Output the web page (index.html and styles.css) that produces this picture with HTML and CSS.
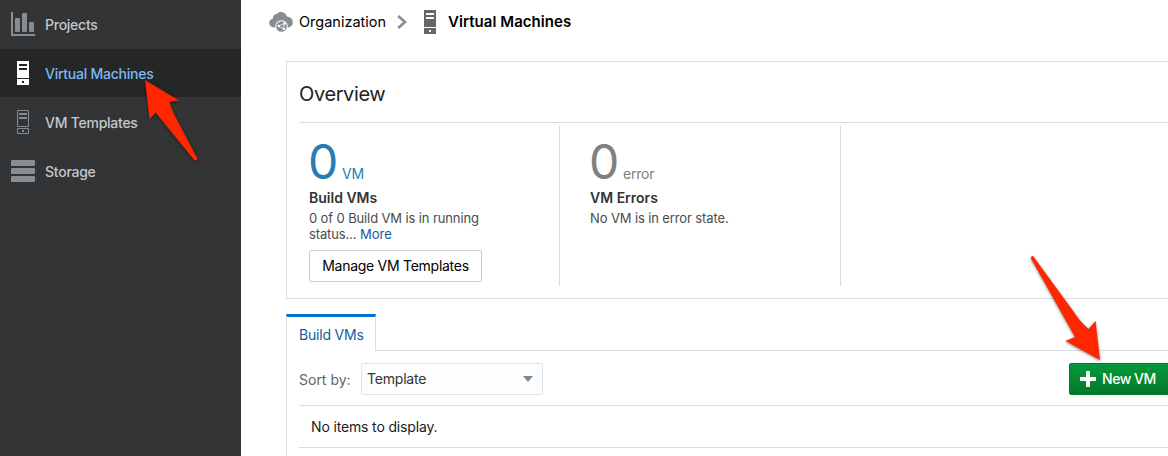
FILE: index.html
```html
<!DOCTYPE html>
<html lang="en">
<head>
<meta charset="utf-8">
<title>Virtual Machines</title>
<link rel="stylesheet" href="styles.css">
</head>
<body>
<div class="app">
  <nav class="sidebar">
    <a class="nav-item">
      <svg class="nav-icon" viewBox="0 0 24 24"><path fill="#878d90" d="M0 0h2v22h22v2H0z"/><rect x="4" y="6" width="5" height="14" rx="1" fill="#878d90"/><rect x="11" y="1" width="5" height="19" rx="1" fill="#878d90"/><rect x="18" y="10" width="5" height="10" rx="1" fill="#878d90"/></svg>
      <span>Projects</span>
    </a>
    <a class="nav-item active">
      <svg class="nav-icon" viewBox="0 0 24 24"><path fill="#fff" fill-rule="evenodd" d="M6 0h12v17H6zM8 3v2h8V3zM8 7v2h8V7zM6 18h12v6H6zM11 20v2h2v-2z"/></svg>
      <span>Virtual Machines</span>
    </a>
    <a class="nav-item">
      <svg class="nav-icon" viewBox="0 0 24 24"><path fill="none" stroke="#878d90" d="M6.5.5h11v16h-11zM6.500 18.500h11v5h-11z"/><path fill="#878d90" d="M8 3h8v2H8zM8 7h8v2H8zM11 20h2v2h-2z"/></svg>
      <span>VM Templates</span>
    </a>
    <a class="nav-item">
      <svg class="nav-icon" viewBox="0 0 24 24"><g fill="#878d90"><rect y="1" width="24" height="6" rx="1"/><rect y="9" width="24" height="6" rx="1"/><rect y="17" width="24" height="6" rx="1"/></g></svg>
      <span>Storage</span>
    </a>
  </nav>
  <main class="main">
    <header class="crumbs">
      <svg class="cloud" viewBox="0 0 24 22"><path fill="#878d90" d="M5 16.500C2 16.500.2 14.500.2 11.800.2 9.500 2 8 4 7.500 3.700 4.500 5.800 3 7.800 3 9 1.300 10.600.8 12.300 1c3 .2 5 2 5.500 4.600 3.200.1 6 2.300 6 5.700 0 2.700-1.600 4.700-4.300 5.200z"/><circle cx="12.500" cy="15.500" r="6.300" fill="#fff"/><circle cx="12.500" cy="15.500" r="5.300" fill="#878d90"/><path fill="none" stroke="#fff" stroke-width=".8" d="M9.500 15l5.800-2.500M9.500 15l5.300 3M15.300 12.500l-.5 5.500"/><g fill="#fff"><circle cx="15.300" cy="12.500" r="1.300"/><circle cx="9.800" cy="15" r="1.200"/><circle cx="14.800" cy="18" r="1.200"/></g></svg>
      <span class="crumb">Organization</span>
      <svg class="chev" viewBox="0 0 10 14"><path fill="none" stroke="#8b9193" stroke-width="2.800" d="M1.200 1L8 7l-6.800 6"/></svg>
      <svg class="server" viewBox="0 0 12 24"><path fill="#656769" fill-rule="evenodd" d="M0 0h12v17H0zM2 3v2h8V3zM2 7v2h8V7zM0 18h12v6H0zM5 20v2h2v-2z"/></svg>
      <span class="crumb current">Virtual Machines</span>
    </header>
    <section class="overview">
      <h2 class="overview-title"><span>Overview</span></h2>
      <div class="stats">
        <div class="stat">
          <div class="figure blue"><span class="num">0</span><span class="unit">VM</span></div>
          <h3 class="stat-name">Build VMs</h3>
          <p class="stat-text">0 of 0 Build VM is in running<br>status... <a class="more">More</a></p>
          <button class="btn">Manage VM Templates</button>
        </div>
        <div class="stat">
          <div class="figure"><span class="num">0</span><span class="unit">error</span></div>
          <h3 class="stat-name">VM Errors</h3>
          <p class="stat-text">No VM is in error state.</p>
        </div>
      </div>
    </section>
    <div class="tabs"><div class="tab">Build VMs</div><div class="tab-rest"></div></div>
    <section class="panel">
      <div class="toolbar">
        <span class="sort-label">Sort by:</span>
        <div class="select"><span>Template</span><svg class="caret" viewBox="0 0 10 6"><path fill="#80868a" d="M0 0h10L5 6z"/></svg></div>
        <button class="new-btn"><svg class="plus" viewBox="0 0 16 16"><path fill="#fff" d="M6 0h4v6h6v4h-6v6H6v-6H0V6h6z"/></svg><span>New VM</span></button>
      </div>
      <div class="empty">No items to display.</div>
    </section>
  </main>
  <svg class="arrows" viewBox="0 0 1168 456"><g fill="#ff2600"><path d="M145 80l34 20.500-9.500 1.500q2 7 5 13l22.500 43q.5 3-2.500 2.500l-39-48-6 7z"/><path d="M1033 256q-2.500 0-2 2.500l44 78.500-9.500 4 34.500 19-4.500-39-7 8q-9-8-15-17.500z"/></g></svg>
</div>
</body>
</html>
```
FILE: styles.css
```css
* { box-sizing: border-box; }
body { margin: 0; font-family: Inter, "Liberation Sans", sans-serif; font-size: 14px; color: #222; background: #fff; }
h2, h3, p { margin: 0; }
button { font: inherit; }
.app { position: relative; display: flex; width: 1168px; height: 456px; overflow: hidden; }
.sidebar { width: 241px; flex: none; background: #333436; }
.nav-item { display: flex; align-items: center; gap: 10px; height: 49px; padding-left: 11px; color: #c3c8cc; font-weight: 500; letter-spacing: -.25px; white-space: nowrap; border-bottom: 1px solid #333436; }
.nav-item.active { background: #252628; color: #7cb8f2; }
.nav-icon { width: 24px; height: 24px; flex: none; }
.main { flex: 1; min-width: 0; }
.crumbs { display: flex; align-items: center; height: 43px; padding-left: 28px; color: #000; white-space: nowrap; }
.cloud { width: 24px; height: 22px; margin-right: 6px; }
.crumb { width: 87px; font-size: 14.500px; }
.chev { width: 10px; height: 14px; margin: 0 17px 0 11px; }
.server { width: 12px; height: 24px; margin-right: 12px; }
.current { width: auto; font-size: 15px; font-weight: 600; letter-spacing: .05px; }
.overview { margin: 18px 0 0 45px; height: 238px; padding-left: 12px; border: 1px solid #d6dfe6; border-right: 0; }
.overview-title { height: 61px; border-bottom: 1px solid #d6dfe6; font-size: 20px; font-weight: 400; letter-spacing: -.38px; line-height: 65px; }
.stats { display: flex; padding-top: 3px; }
.stat { width: 261px; height: 160px; padding: 9px 0 0 10px; border-right: 1px solid #d6dfe6; }
.stat + .stat { width: 281px; padding-left: 30px; }
.figure { display: flex; align-items: baseline; height: 53px; color: #808080; line-height: 54px; }
.figure.blue { color: #267db3; }
.num { width: 29px; font-size: 48px; margin: 0 5px 0 -1px; }
.unit { letter-spacing: -.2px; }
.stat-name { height: 19px; font-size: 14px; font-weight: 600; line-height: 19px; color: #333; }
.stat-text { margin-top: 3px; font-size: 13px; line-height: 16px; letter-spacing: -.12px; color: #4c4c4c; white-space: nowrap; }
.more { color: #145c9e; letter-spacing: 0; }
.btn { display: block; width: 173px; height: 32px; margin-top: 8px; padding: 0 0 2px; border: 1px solid #c4ced7; border-radius: 2px; background: #fff; color: #000; letter-spacing: -.27px; white-space: nowrap; }
.tabs { display: flex; height: 37px; margin: 15px 0 0 45px; }
.tab { width: 90px; padding-left: 12px; border: 1px solid #d6dfe6; border-top: 3px solid #0572ce; border-bottom: 0; line-height: 35px; letter-spacing: -.2px; color: #145c9e; white-space: nowrap; }
.tab-rest { flex: 1; border-bottom: 1px solid #d6dfe6; }
.panel { margin-left: 45px; padding-left: 12px; height: 106px; border-left: 1px solid #d6dfe6; }
.toolbar { display: flex; height: 55px; padding-top: 12px; border-bottom: 1px solid #d6dfe6; }
.sort-label { width: 62px; line-height: 34px; color: #5f6367; white-space: nowrap; }
.select { display: flex; justify-content: space-between; align-items: center; width: 182px; height: 32px; padding: 0 9px 0 5px; border: 1px solid #dfe4e7; border-radius: 2px; background: #fcfdfe; color: #333; }
.select span { padding-bottom: 2px; letter-spacing: -.2px; }
.caret { width: 10px; height: 6px; }
.new-btn { display: flex; align-items: center; gap: 6px; width: 101px; height: 32px; margin-left: auto; margin-right: -2px; padding: 0 0 0 10px; border: 1px solid #037a2c; border-radius: 2px; background: linear-gradient(#06993b, #04782c); color: #fff; font-weight: 500; letter-spacing: -.45px; white-space: nowrap; }
.new-btn span { padding-bottom: 2px; }
.plus { width: 16px; height: 16px; flex: none; }
.empty { height: 42px; padding-left: 12px; border-bottom: 1px solid #d6dfe6; line-height: 41px; letter-spacing: -.15px; }
.arrows { position: absolute; left: 0; top: 0; width: 1168px; height: 456px; pointer-events: none; filter: drop-shadow(0 1.500px 1.500px rgba(0,0,0,.5)); }
```
